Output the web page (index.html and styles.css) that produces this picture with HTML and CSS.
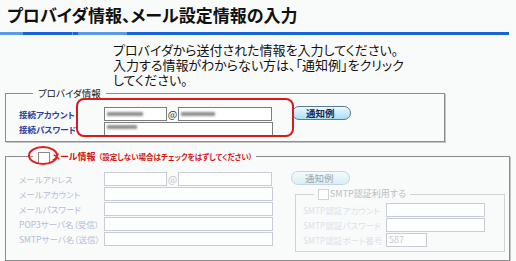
FILE: index.html
```html
<!DOCTYPE html>
<html lang="ja">
<head>
    <meta charset="UTF-8">
    <title>プロバイダ情報、メール設定情報の入力</title>
    <link rel="stylesheet" href="styles.css">
</head>
<body>
<div class="page">
    <h1 class="title">プロバイダ情報、メール設定情報の入力</h1>
    <div class="bar"></div>
    <p class="intro">プロバイダから送付された情報を入力してください。<br>入力する情報がわからない方は、「通知例」をクリック<br>してください。</p>

    <!-- プロバイダ情報 -->
    <fieldset class="group provider">
        <legend class="caption">プロバイダ情報</legend>
        <div class="cols">
            <div class="rows">
                <div class="row">
                    <span class="label">接続アカウント</span>
                    <span class="field short"><i class="smudge s1"></i></span>
                    <span class="at">@</span>
                    <span class="field mid"><i class="smudge s2"></i></span>
                </div>
                <div class="row">
                    <span class="label">接続パスワード</span>
                    <span class="field long"><i class="smudge s3"></i></span>
                </div>
            </div>
            <a href="javascript:void(0);" class="notice">通知例</a>
            <div class="mark-box"></div>
        </div>
    </fieldset>

    <!-- メール情報 (無効) -->
    <fieldset class="group mail">
        <legend class="caption mail-cap">
            <span class="check-wrap"><span class="check"></span><span class="mark-ring"></span></span><b class="mail-title">メール情報</b><span class="mail-note">（設定しない場合はチェックをはずしてください）</span>
        </legend>
        <div class="cols">
            <div class="rows off">
                <div class="row">
                    <span class="label">メールアドレス</span>
                    <span class="field short"></span>
                    <span class="at">@</span>
                    <span class="field mid"></span>
                </div>
                <div class="row">
                    <span class="label">メールアカウント</span>
                    <span class="field long"></span>
                </div>
                <div class="row">
                    <span class="label">メールパスワード</span>
                    <span class="field long"></span>
                </div>
                <div class="row">
                    <span class="label">POP3サーバ名（受信）</span>
                    <span class="field long"></span>
                </div>
                <div class="row">
                    <span class="label">SMTPサーバ名（送信）</span>
                    <span class="field long"></span>
                </div>
            </div>
            <div class="side">
                <a href="javascript:void(0);" class="notice faded">通知例</a>
                <fieldset class="smtp">
                    <legend class="smtp-cap"><span class="check pale"></span>SMTP認証利用する</legend>
                    <div class="row">
                        <span class="slabel">SMTP認証アカウント</span>
                        <span class="field sfield"></span>
                    </div>
                    <div class="row">
                        <span class="slabel">SMTP認証パスワード</span>
                        <span class="field sfield"></span>
                    </div>
                    <div class="row">
                        <span class="slabel">SMTP認証ポート番号</span>
                        <span class="field port">587</span>
                    </div>
                </fieldset>
            </div>
        </div>
    </fieldset>
</div>
</body>
</html>
```

FILE: styles.css
```css
body,h1,p,fieldset,legend{margin:0;padding:0}
body{
    background:#f9fbfa;
    color:#111;
    font-family:"Noto Sans CJK JP", "Noto Sans", sans-serif;
    font-feature-settings:"palt";
}
a{text-decoration:none}
.page{
    width:516px;
    padding-top:5px;
}
.title{
    font-size:17px;
    line-height:20px;
    font-weight:700;
    padding-left:7px;
    color:#111;
}
.bar{
    width:509px;
    height:3px;
    margin-top:7px;
    background:linear-gradient(to right,#5b9ae6 0,#5b9ae6 23px,#1763dc 23px,#1763dc 72px,#5b9ae6 72px,#5b9ae6 73px,#1763dc 73px,#1763dc 78px,#5b9ae6 78px,#5b9ae6 127px,#1763dc 127px);
}
.intro{
    margin:7px 0 0 113px;
    font-size:13px;
    line-height:15px;
}

/* 枠 */
.group{
    margin:0 0 0 5px;
    padding:7px 0 5px 13px;
    border:1px solid #8c8c8c;
    box-shadow:1px 1px 0 #c4c4c4;
    min-width:0;
}
.provider{width:440px;box-sizing:border-box}
.mail{width:505px;box-sizing:border-box;margin-top:8px;padding-top:8px;padding-bottom:8px}
.caption{
    margin-left:14px;
    padding:0 5px;
    font-size:9.5px;
    line-height:12px;
}
.cols{
    display:flex;
    align-items:flex-start;
    position:relative;
}
.row{
    display:flex;
    align-items:center;
    height:15px;
}
.label{
    flex:0 0 85px;
    min-width:0;
    font-size:8.5px;
    font-weight:700;
    color:#2b3b9e;
    white-space:nowrap;
}
.field{
    display:block;
    flex:none;
    height:14px;
    box-sizing:border-box;
    border:1px solid #7c7c7c;
    background:#fff;
    position:relative;
}
.short{width:63px}
.mid{width:94px}
.long{width:169px}
.at{
    flex:0 0 11px;
    text-align:center;
    font-size:10px;
    color:#333;
}
.smudge{
    display:block;
    position:absolute;
    left:2px;
    top:4px;
    height:4px;
    background:#8f8f8f;
    filter:blur(1.3px);
}
.s1{width:36px}
.s2{width:34px}
.s3{width:30px;top:2px}

.notice{
    display:block;
    flex:none;
    width:59px;
    height:14px;
    margin-left:19px;
    box-sizing:border-box;
    border:1px solid #5b7894;
    border-radius:7px;
    background:linear-gradient(#eefaff,#a9def6);
    font-size:9.5px;
    line-height:12px;
    font-weight:700;
    color:#1b2550;
    padding-left:13px;
}
.mark-box{
    position:absolute;
    left:57px;
    top:-8px;
    width:218px;
    height:39px;
    box-sizing:border-box;
    border:2px solid #d71a1a;
    border-radius:8px;
}

/* メール情報 */
.mail-cap{
    display:flex;
    align-items:center;
    line-height:13px;
    margin-left:14px;
    padding:0 4px 0 5px;
}
.check-wrap{position:relative;display:block;height:12px}
.check{
    display:inline-block;
    width:10px;
    height:10px;
    border:1px solid #8a8a8a;
    background:#fff;
    vertical-align:middle;
}
.mark-ring{
    position:absolute;
    left:-10px;
    top:-5px;
    width:30px;
    height:19px;
    box-sizing:border-box;
    border:2px solid #e01f1f;
    border-radius:50%;
}
.mail-title{
    font-size:9px;
    color:#d41414;
    margin-left:2px;
}
.mail-note{
    font-size:7.5px;
    font-weight:700;
    color:#d41414;
    margin-left:3px;
}
.off .label{color:#b7bbd6;font-weight:400}
.off .field,.smtp .field{border-color:#c8ccd4;background:#fdfefe}
.off .at{color:#c4c8d0}
.side{
    margin-left:18px;
}
.faded{
    border-color:#c4d6e0;
    background:linear-gradient(#f3fbfd,#d9eff7);
    color:#98a3b0;
    font-weight:400;
    margin-left:0;
}
.smtp{
    margin:3px 0 0 4px;
    width:210px;
    box-sizing:border-box;
    padding:2px 0 4px 7px;
    border:1px solid #cfd3d6;
}
.smtp-cap{
    margin-left:11px;
    padding:0 4px;
    font-size:9px;
    line-height:12px;
    color:#b9bec4;
}
.check.pale{
    border-color:#d0d3d6;
    width:9px;
    height:9px;
    margin-right:1px;
}
.slabel{
    flex:0 0 83px;
    min-width:0;
    font-size:8.5px;
    color:#dde0ea;
    white-space:nowrap;
}
.sfield{width:99px}
.port{
    width:41px;
    font-size:9px;
    line-height:12px;
    color:#c9ccd2;
    padding-left:2px;
}
```
